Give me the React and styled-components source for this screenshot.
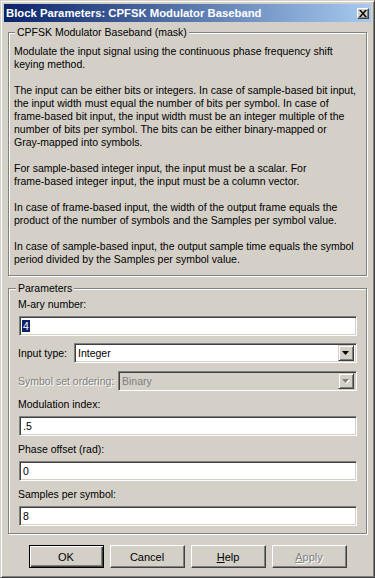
import React from 'react'
import styled, { createGlobalStyle } from 'styled-components'

const GlobalStyle = createGlobalStyle`
    html, body {
        margin: 0;
        padding: 0;
        background: #d4d0c8;
    }

    body {
        font-family: "Liberation Sans", Arial, sans-serif;
        font-size: 10.5px;
        color: #000000;
    }

    * {
        box-sizing: border-box;
    }
`

const Window = styled.div`
    display: flex;
    flex-direction: column;

    width: 375px;
    height: 578px;
    padding: 3px;

    background: #d4d0c8;
    border: 1px solid;
    border-color: #d4d0c8 #404040 #404040 #d4d0c8;
    box-shadow: inset 1px 1px 0 #ffffff, inset -1px -1px 0 #808080;
`

const TitleBar = styled.div`
    display: flex;
    align-items: center;
    justify-content: space-between;

    height: 18px;
    padding: 0 2px 0 2px;

    background: linear-gradient(to right, #0a246a, #a6caf0);
`

const Title = styled.div`
    color: #ffffff;
    font-weight: bold;
    font-size: 11.3px;
    line-height: 13px;
    white-space: nowrap;
`

const CloseButton = styled.div`
    display: flex;
    align-items: center;
    justify-content: center;

    width: 12px;
    height: 11px;

    background: #d4d0c8;
    border: 1px solid;
    border-color: #ffffff #404040 #404040 #ffffff;
    box-shadow: inset -1px -1px 0 #808080;
`

const Body = styled.div`
    display: flex;
    flex-direction: column;
    flex: 1;
    padding: 0 4px;
`

const Group = styled.div`
    margin-top: ${p => p.$top}px;
    padding: ${p => p.$pad};

    border: 1px solid #808080;
    box-shadow: inset 1px 1px 0 #ffffff, 1px 1px 0 #ffffff;
`

const Legend = styled.div`
    display: table;
    margin: -7px 0 0 ${p => p.$indent || 6}px;
    padding: 0 2px;

    background: #d4d0c8;
    line-height: 13px;
    white-space: nowrap;
`

const Description = styled.div`
    margin-top: 6px;
    padding: 0 5px;
    line-height: 13px;
`

const Paragraph = styled.div`
    & + & {
        margin-top: 13px;
    }

    div {
        white-space: nowrap;
    }
`

const Params = styled.div`
    display: flex;
    flex-direction: column;
    margin-top: 2px;
`

const Label = styled.div`
    line-height: 14px;
    margin: ${p => p.$gap || 0}px 0 5px -1px;
    white-space: nowrap;
`

const TextBox = styled.div`
    display: flex;
    align-items: center;

    height: 20px;
    padding: 0 3px;

    background: #ffffff;
    border: 1px solid;
    border-color: #808080 #ffffff #ffffff #808080;
    box-shadow: inset 1px 1px 0 #404040, inset -1px -1px 0 #d4d0c8;
    white-space: nowrap;
`

const Selected = styled.span`
    background: #0a246a;
    color: #ffffff;
    padding: 0 1px;
    margin-left: -1px;
    line-height: 12px;
`

const SelectRow = styled.div`
    display: grid;
    grid-template-columns: ${p => p.$labelWidth}px 1fr;
    align-items: center;
    margin-top: ${p => p.$gap}px;

    color: ${p => (p.$disabled ? '#808080' : '#000000')};
`

const RowLabel = styled.div`
    margin-left: -1px;
    white-space: nowrap;
    text-shadow: ${p => (p.$disabled ? '1px 1px 0 #ffffff' : 'none')};
`

const Select = styled.div`
    display: flex;
    align-items: center;

    height: 20px;
    padding: 2px 2px 2px 3px;

    background: ${p => (p.$disabled ? '#d4d0c8' : '#ffffff')};
    border: 1px solid;
    border-color: #808080 #ffffff #ffffff #808080;
    box-shadow: inset 1px 1px 0 #404040, inset -1px -1px 0 #d4d0c8;
`

const SelectText = styled.div`
    flex: 1;
`

const ArrowButton = styled.div`
    display: flex;
    align-items: center;
    justify-content: center;

    width: 16px;
    height: 16px;

    background: #d4d0c8;
    border: 1px solid;
    border-color: #d4d0c8 #404040 #404040 #d4d0c8;
    box-shadow: inset 1px 1px 0 #ffffff, inset -1px -1px 0 #808080;
`

const Buttons = styled.div`
    display: flex;
    justify-content: center;
    gap: 6px;
    margin-top: 11px;
`

const Button = styled.div`
    display: flex;
    align-items: center;
    justify-content: center;

    width: 75px;
    height: 23px;

    background: #d4d0c8;
    border: 1px solid;
    border-color: ${p => (p.$default ? '#000000' : '#ffffff #404040 #404040 #ffffff')};
    box-shadow: ${p => (p.$default
        ? 'inset 1px 1px 0 #ffffff, inset -1px -1px 0 #404040, inset -2px -2px 0 #808080'
        : 'inset -1px -1px 0 #808080')};

    font-size: 11px;
    color: ${p => (p.$disabled ? '#808080' : '#000000')};
    text-shadow: ${p => (p.$disabled ? '1px 1px 0 #ffffff' : 'none')};

    u {
        text-decoration: underline;
    }
`

const Arrow = ({ disabled }) => (
    <svg width="8" height="5" viewBox="0 0 8 5">
        {disabled && <path d="M1 1h7l-3.5 4z" fill="#ffffff" />}
        <path d="M0 0h7L3.5 4z" fill={disabled ? '#808080' : '#000000'} />
    </svg>
)

const description = [
    ['Modulate the input signal using the continuous phase frequency shift', 'keying method.'],
    [
        'The input can be either bits or integers. In case of sample-based bit input,',
        'the input width must equal the number of bits per symbol. In case of',
        'frame-based bit input, the input width must be an integer multiple of the',
        'number of bits per symbol. The bits can be either binary-mapped or',
        'Gray-mapped into symbols.',
    ],
    ['For sample-based integer input, the input must be a scalar. For', 'frame-based integer input, the input must be a column vector.'],
    [
        'In case of frame-based input, the width of the output frame equals the',
        'product of the number of symbols and the Samples per symbol value.',
    ],
    [
        'In case of sample-based input, the output sample time equals the symbol',
        'period divided by the Samples per symbol value.',
    ],
]

const App = () => (
    <Window>
        <GlobalStyle />
        <TitleBar>
            <Title>Block Parameters: CPFSK Modulator Baseband</Title>
            <CloseButton>
                <svg width="8" height="7" viewBox="0 0 8 7">
                    <path d="M0 0h2l2 2.5L6 0h2L5 3.5 8 7H6L4 4.5 2 7H0l3-3.5z" fill="#000000" />
                </svg>
            </CloseButton>
        </TitleBar>

        <Body>
            <Group $top={10} $pad="0 0 9px 0">
                <Legend>CPFSK Modulator Baseband (mask)</Legend>
                <Description>
                    {description.map((lines, i) => (
                        <Paragraph key={i}>
                            {lines.map(line => <div key={line}>{line}</div>)}
                        </Paragraph>
                    ))}
                </Description>
            </Group>

            <Group $top={12} $pad="0 9px 7px 10px">
                <Legend $indent={-3}>Parameters</Legend>
                <Params>
                    <Label>M-ary number:</Label>
                    <TextBox><Selected>4</Selected></TextBox>

                    <SelectRow $gap={7} $labelWidth={55}>
                        <RowLabel>Input type:</RowLabel>
                        <Select>
                            <SelectText>Integer</SelectText>
                            <ArrowButton><Arrow /></ArrowButton>
                        </Select>
                    </SelectRow>

                    <SelectRow $gap={8} $labelWidth={99} $disabled>
                        <RowLabel $disabled>Symbol set ordering:</RowLabel>
                        <Select $disabled>
                            <SelectText>Binary</SelectText>
                            <ArrowButton><Arrow disabled /></ArrowButton>
                        </Select>
                    </SelectRow>

                    <Label $gap={6}>Modulation index:</Label>
                    <TextBox>.5</TextBox>

                    <Label $gap={6}>Phase offset (rad):</Label>
                    <TextBox>0</TextBox>

                    <Label $gap={6}>Samples per symbol:</Label>
                    <TextBox>8</TextBox>
                </Params>
            </Group>

            <Buttons>
                <Button $default>OK</Button>
                <Button>Cancel</Button>
                <Button><span><u>H</u>elp</span></Button>
                <Button $disabled><span><u>A</u>pply</span></Button>
            </Buttons>
        </Body>
    </Window>
)

export default App
